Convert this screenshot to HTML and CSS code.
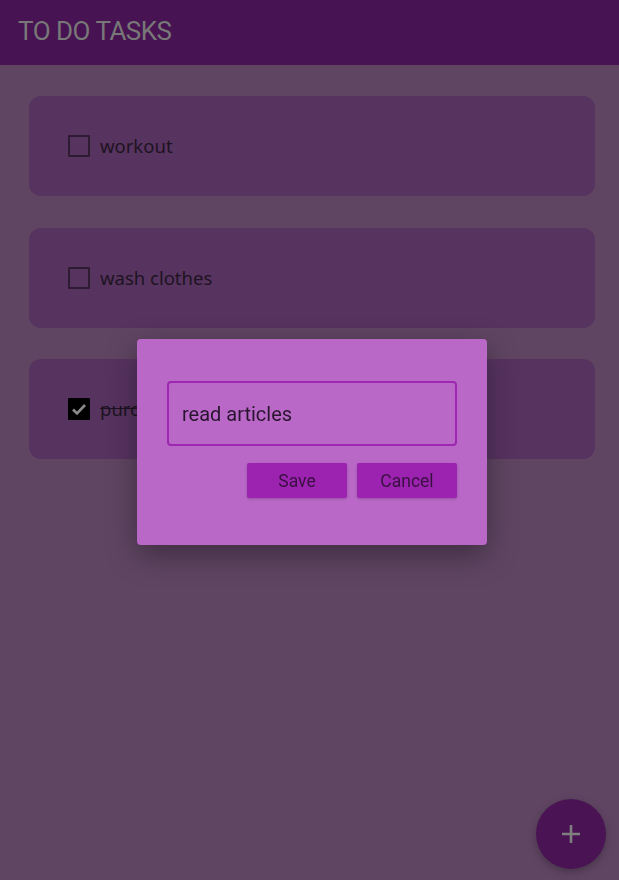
FILE: index.html
```html
<!DOCTYPE html>
<html>
<head>
<meta charset="utf-8">
<link rel="stylesheet" href="styles.css">
</head>
<body>
<header class="topbar"><h1 class="title">TO DO TASKS</h1></header>
<main class="list">
  <div class="card"><span class="box"></span><span class="label">workout</span></div>
  <div class="card"><span class="box"></span><span class="label">wash clothes</span></div>
  <div class="card"><span class="box checked"><svg viewBox="0 0 22 22" width="22" height="22"><path d="M5 11.5l4 4 8-8.5" fill="none" stroke="#8a8a8a" stroke-width="2.6"/></svg></span><span class="label done">purc</span></div>
</main>
<button class="fab" aria-label="add"><svg viewBox="0 0 24 24" width="24" height="24"><path d="M12 3v18M3 12h18" stroke="#7f7f7f" stroke-width="2.6"/></svg></button>
<div class="overlay">
  <div class="dialog">
    <div class="field">read articles</div>
    <div class="actions">
      <button class="btn">Save</button>
      <button class="btn">Cancel</button>
    </div>
  </div>
</div>
</body>
</html>
```
FILE: styles.css
```css
html, body { margin: 0; padding: 0; }
body {
  background: #5f4562;
  min-height: 880px;
  font-family: "Noto Sans", "Open Sans", sans-serif;
}
.topbar {
  background: #481352;
  height: 65px;
  display: flex;
  align-items: center;
  padding-left: 18px;
}
.title {
  margin: 0 0 4px 0;
  font-family: Roboto, sans-serif;
  font-weight: 400;
  font-size: 26px;
  color: #787878;
  letter-spacing: -0.5px;
}
.list {
  display: flex;
  flex-direction: column;
  gap: 32px;
  padding: 31px 24px 0 29px;
}
.card {
  background: #573360;
  height: 100px;
  border-radius: 12px;
  display: flex;
  align-items: center;
  padding-left: 39px;
  box-sizing: border-box;
}
.card:nth-child(3) { margin-top: -1px; }
.box {
  width: 22px;
  height: 22px;
  box-sizing: border-box;
  border: 2px solid #2f1c33;
  border-radius: 1px;
  margin-right: 10px;
  display: flex;
}
.box.checked { background: #000; border-color: #000; }
.box.checked svg { margin: -2px; }
.label {
  font-size: 18.5px;
  color: #1d1320;
  margin-bottom: 2px;
}
.done { text-decoration: line-through; }
.fab {
  position: fixed;
  right: 13px;
  bottom: 11px;
  width: 70px;
  height: 70px;
  border-radius: 50%;
  border: none;
  background: #4a1353;
  display: flex;
  align-items: center;
  justify-content: center;
  box-shadow: 0 3px 8px rgba(0,0,0,0.25);
  padding: 0;
}
.overlay {
  position: fixed;
  inset: 0;
  display: flex;
  align-items: center;
  justify-content: center;
  padding: 4px 0 0 5px;
}
.dialog {
  width: 350px;
  height: 206px;
  box-sizing: border-box;
  background: #b968c7;
  border-radius: 4px;
  padding: 42px 30px 0 30px;
  box-shadow: 0 10px 30px rgba(0,0,0,0.35);
  display: flex;
  flex-direction: column;
  gap: 17px;
}
.field {
  height: 65px;
  box-sizing: border-box;
  border: 2px solid #9d27b1;
  border-radius: 4px;
  display: flex;
  align-items: center;
  padding-left: 13px;
  font-family: Roboto, sans-serif;
  font-size: 20px;
  color: #2a1530;
}
.actions {
  display: flex;
  justify-content: flex-end;
  gap: 10px;
}
.btn {
  width: 100px;
  height: 35px;
  border: none;
  border-radius: 2px;
  background: #9c22b0;
  color: #3a1042;
  font-family: Roboto, sans-serif;
  font-size: 17.5px;
  box-shadow: 0 1px 3px rgba(0,0,0,0.2);
  padding: 0;
}
```
